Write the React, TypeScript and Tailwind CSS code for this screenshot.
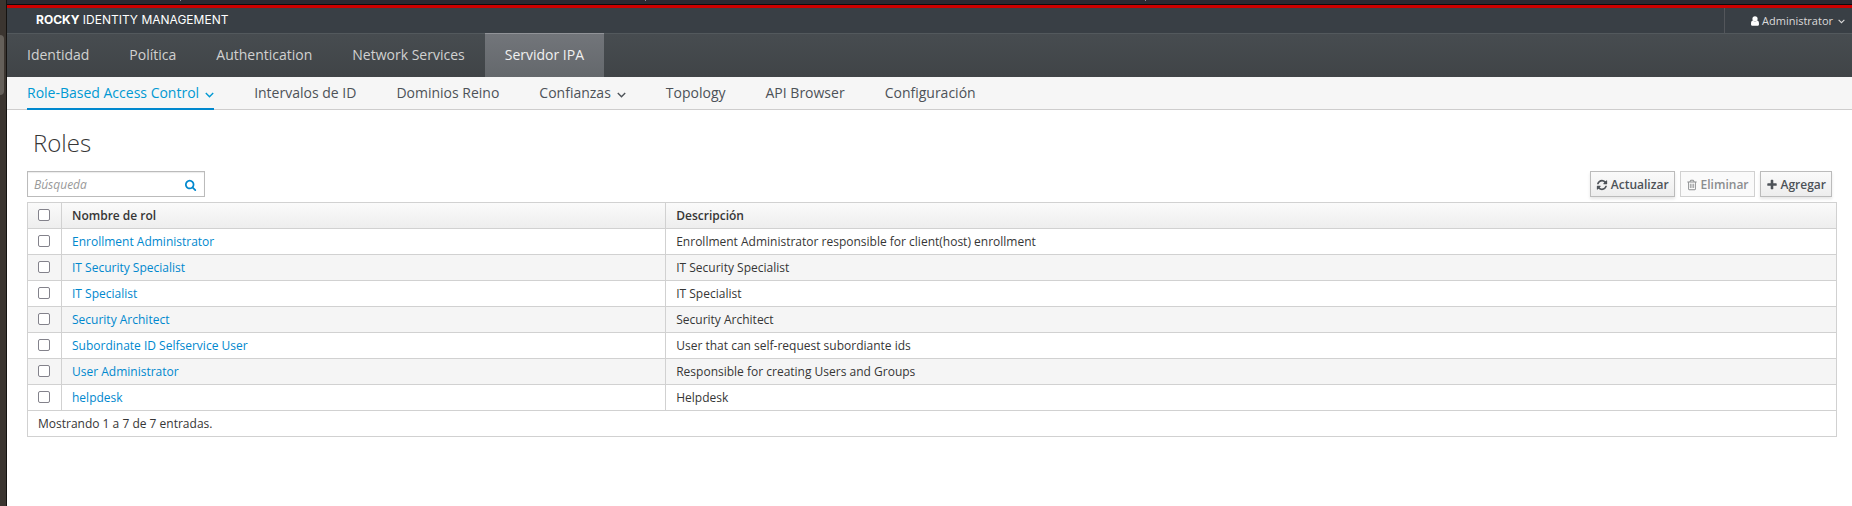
import type { ReactNode } from "react";

const NAV = [
  { label: "Identidad" },
  { label: "Política" },
  { label: "Authentication" },
  { label: "Network Services" },
  { label: "Servidor IPA", active: true },
];

const SUBNAV = [
  { label: "Role-Based Access Control", menu: true, active: true },
  { label: "Intervalos de ID" },
  { label: "Dominios Reino" },
  { label: "Confianzas", menu: true },
  { label: "Topology" },
  { label: "API Browser" },
  { label: "Configuración" },
];

const ROLES = [
  { name: "Enrollment Administrator", description: "Enrollment Administrator responsible for client(host) enrollment" },
  { name: "IT Security Specialist", description: "IT Security Specialist" },
  { name: "IT Specialist", description: "IT Specialist" },
  { name: "Security Architect", description: "Security Architect" },
  { name: "Subordinate ID Selfservice User", description: "User that can self-request subordiante ids" },
  { name: "User Administrator", description: "Responsible for creating Users and Groups" },
  { name: "helpdesk", description: "Helpdesk" },
];

const ICONS = {
  search:
    "M1152 832q0-185-131.5-316.5t-316.5-131.5-316.5 131.5-131.5 316.5 131.5 316.5 316.5 131.5 316.5-131.5 131.5-316.5zm512 832q0 52-38 90t-90 38q-54 0-90-38l-343-342q-179 124-399 124-143 0-273.5-55.5t-225-150-150-225-55.5-273.5 55.5-273.5 150-225 225-150 273.5-55.5 273.5 55.5 225 150 150 225 55.5 273.5q0 220-124 399l343 343q37 37 37 90z",
  refresh:
    "M1639 1056q0 5-1 7-64 268-268 434.5t-478 166.5q-146 0-282.5-55t-243.5-157l-129 129q-19 19-45 19t-45-19-19-45v-448q0-26 19-45t45-19h448q26 0 45 19t19 45-19 45l-137 137q71 66 161 102t187 36q134 0 250-65t186-179q11-17 53-117 8-23 30-23h192q13 0 22.5 9.5t9.5 22.5zm25-800v448q0 26-19 45t-45 19h-448q-26 0-45-19t-19-45 19-45l138-138q-148-137-349-137-134 0-250 65t-186 179q-11 17-53 117-8 23-30 23h-199q-13 0-22.5-9.5t-9.5-22.5v-7q65-268 270-434.5t480-166.5q146 0 284 55.5t245 156.5l130-129q19-19 45-19t45 19 19 45z",
  trash:
    "M704 736v576q0 14-9 23t-23 9h-64q-14 0-23-9t-9-23v-576q0-14 9-23t23-9h64q14 0 23 9t9 23zm256 0v576q0 14-9 23t-23 9h-64q-14 0-23-9t-9-23v-576q0-14 9-23t23-9h64q14 0 23 9t9 23zm256 0v576q0 14-9 23t-23 9h-64q-14 0-23-9t-9-23v-576q0-14 9-23t23-9h64q14 0 23 9t9 23zm128 724v-948h-896v948q0 22 7 40.5t14.5 27 10.5 8.5h832q3 0 10.5-8.5t14.5-27 7-40.5zm-672-1076h448l-48-117q-7-9-17-11h-317q-10 2-17 11zm928 32v64q0 14-9 23t-23 9h-96v948q0 83-47 143.5t-113 60.5h-832q-66 0-113-58.5t-47-141.5v-952h-96q-14 0-23-9t-9-23v-64q0-14 9-23t23-9h309l70-167q15-37 54-63t79-26h320q40 0 79 26t54 63l70 167h309q14 0 23 9t9 23z",
  plus: "M1600 736v192q0 40-28 68t-68 28h-416v416q0 40-28 68t-68 28h-192q-40 0-68-28t-28-68v-416h-416q-40 0-68-28t-28-68v-192q0-40 28-68t68-28h416v-416q0-40 28-68t68-28h192q40 0 68 28t28 68v416h416q40 0 68 28t28 68z",
};

const Icon = ({ name, className }: { name: keyof typeof ICONS; className: string }) => (
  <svg viewBox="0 0 1792 1792" fill="currentColor" className={className} aria-hidden="true">
    <path d={ICONS[name]} />
  </svg>
);

const Caret = ({ className }: { className: string }) => (
  <svg viewBox="0 0 9 6" fill="none" stroke="currentColor" className={className} aria-hidden="true">
    <path d="M.8 1 4.5 4.7 8.2 1" strokeWidth="1.4" />
  </svg>
);

const Checkbox = ({ label }: { label: string }) => (
  <input
    type="checkbox"
    aria-label={label}
    className="block size-3 appearance-none rounded-xs border border-[#83828b] bg-white checked:bg-[#0088ce]"
  />
);

const ToolbarButton = ({ icon, disabled, children }: { icon: keyof typeof ICONS; disabled?: boolean; children: ReactNode }) => (
  <button
    type="button"
    disabled={disabled}
    className="flex h-[26px] items-center gap-[3px] border border-[#bbb] bg-linear-to-b from-[#fafafa] to-[#ededed] px-[5px] pt-px text-xs font-semibold text-[#4d5258] shadow-[0_2px_3px_rgba(3,3,3,0.1)] disabled:border-[#d1d1d1] disabled:bg-[#fafafa] disabled:from-[#fafafa] disabled:to-[#fafafa] disabled:text-[#8b8d8f] disabled:shadow-none"
  >
    <Icon name={icon} className="size-3" />
    {children}
  </button>
);

const Header = () => (
  <header>
    <div className="flex h-[25px] items-stretch justify-between bg-[#393f45]">
      <div className="flex items-center pb-0.5 pl-[29px] font-[Inter,sans-serif] text-xs text-white">
        <span>
          <b className="font-bold">ROCKY</b> IDENTITY MANAGEMENT
        </span>
      </div>
      <button
        type="button"
        className="flex items-center border-l border-[#53565b] pt-px pr-[7px] pl-[26px] text-[11px] text-[#dbdada]"
      >
        <svg viewBox="0 0 8 10" fill="#fff" className="mr-[3px] h-2.5 w-2" aria-hidden="true">
          <circle cx="4" cy="2.8" r="2.6" />
          <path d="M0 8c0-2.4.8-3.4 2-3.4.5.6 1.2.9 2 .9s1.5-.3 2-.9C7.2 4.6 8 5.6 8 8c0 1.2-.5 1.8-1.4 1.8H1.4C.5 9.8 0 9.2 0 8z" />
        </svg>
        Administrator
        <Caret className="mt-px ml-[5px] w-[7px]" />
      </button>
    </div>

    <nav className="flex h-11 border-t border-[#53595d] bg-linear-to-b from-[#474c50] to-[#404447]">
      {NAV.map((item) => (
        <a
          key={item.label}
          href="#"
          className={
            item.active
              ? "-mt-px flex items-center border-t border-[#919398] bg-linear-to-b from-[#72757a] to-[#64686c] px-5 pb-0.5 text-sm text-[#f1f1f1]"
              : "flex items-center px-5 pb-0.5 text-sm text-[#d1d1d1]"
          }
        >
          {item.label}
        </a>
      ))}
    </nav>

    <nav className="flex h-[33px] gap-10 border-b border-[#cecdcd] bg-[#f6f6f6] px-5">
      {SUBNAV.map((item) => (
        <a
          key={item.label}
          href="#"
          className={
            item.active
              ? "-mb-px flex items-center border-b-2 border-[#0088ce] text-sm text-[#0099d3]"
              : "flex items-center text-sm text-[#4d5258]"
          }
        >
          {item.label}
          {item.menu && <Caret className="mt-1 ml-1.5 w-[9px]" />}
        </a>
      ))}
    </nav>
  </header>
);

const RolesTable = () => (
  <table className="mt-[5px] w-full border-collapse border border-[#d1d1d1] text-left text-xs text-[#363636]">
    <thead>
      <tr className="h-[26px] bg-linear-to-b from-[#fafafa] to-[#ededed]">
        <th className="w-[34px] border border-[#d1d1d1] pb-0.5 pl-2.5">
          <Checkbox label="Seleccionar todo" />
        </th>
        <th className="w-[33.4%] border border-[#d1d1d1] px-2.5 font-semibold">Nombre de rol</th>
        <th className="border border-[#d1d1d1] px-2.5 font-semibold">Descripción</th>
      </tr>
    </thead>
    <tbody>
      {ROLES.map((role) => (
        <tr key={role.name} className="h-[26px] even:bg-[#f5f5f5]">
          <td className="border border-[#d1d1d1] pb-0.5 pl-2.5">
            <Checkbox label={role.name} />
          </td>
          <td className="border border-[#d1d1d1] px-2.5">
            <a href="#" className="text-[#0088ce]">
              {role.name}
            </a>
          </td>
          <td className="border border-[#d1d1d1] px-2.5">{role.description}</td>
        </tr>
      ))}
    </tbody>
    <tfoot>
      <tr className="h-[26px]">
        <td colSpan={3} className="border border-[#d1d1d1] px-2.5">
          Mostrando 1 a {ROLES.length} de {ROLES.length} entradas.
        </td>
      </tr>
    </tfoot>
  </table>
);

export default function App() {
  return (
    <div className="flex min-h-screen bg-white font-['Open_Sans',sans-serif]">
      {/* desktop showing beside the window */}
      <div className="w-[7px] shrink-0 border-r border-[#151311] bg-[#3b3530] pt-[35px]">
        <div className="h-[60px] w-1 rounded-r bg-[#65605a]" />
      </div>

      <div className="min-w-0 grow">
        <div className="flex h-1 bg-[#2b2a33]">
          <i className="ml-[173px] h-px w-px bg-[#8f8f9d]" />
          <i className="ml-[464px] h-px w-px bg-[#8f8f9d]" />
          <i className="ml-[499px] h-px w-px bg-[#8f8f9d]" />
        </div>
        <div className="h-1 border-t border-[#0c0c0d] bg-[#cc0000]" />
        <Header />

        <main className="pr-[15px] pl-5">
          <h1 className="mt-[17px] px-1.5 text-2xl leading-8 font-light text-[#363636]">Roles</h1>
          <div className="mt-3 flex items-center justify-between pr-[5px]">
            <form className="flex h-[26px] w-[178px] items-center border border-[#bbb] pt-px pr-[7px] shadow-[inset_0_1px_1px_rgba(3,3,3,0.08)]">
              <input
                type="text"
                aria-label="Búsqueda"
                placeholder="Búsqueda"
                className="min-w-0 grow px-1.5 text-xs outline-none placeholder:text-[#999] placeholder:italic"
              />
              <button type="button" aria-label="Buscar" className="text-[#0088ce]">
                <Icon name="search" className="size-3" />
              </button>
            </form>
            <div className="flex gap-[5px]">
              <ToolbarButton icon="refresh">Actualizar</ToolbarButton>
              <ToolbarButton icon="trash" disabled>
                Eliminar
              </ToolbarButton>
              <ToolbarButton icon="plus">Agregar</ToolbarButton>
            </div>
          </div>
          <RolesTable />
        </main>
      </div>
    </div>
  );
}
